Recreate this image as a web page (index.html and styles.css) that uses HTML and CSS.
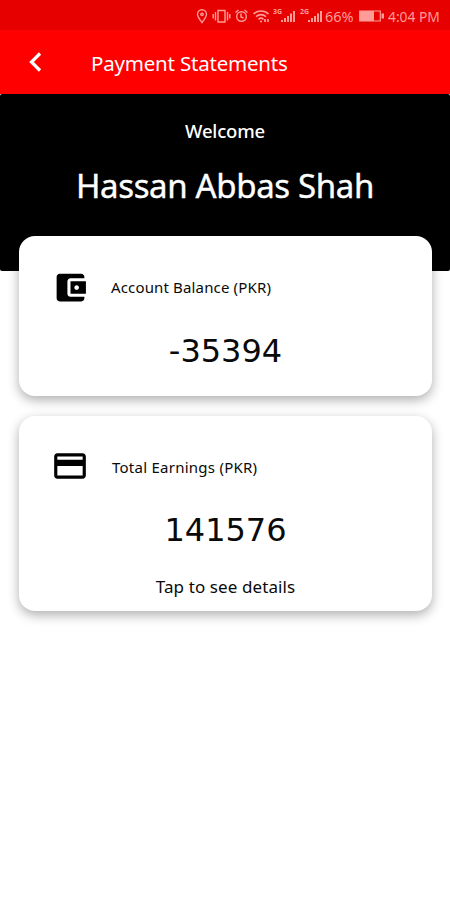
FILE: index.html
```html
<!DOCTYPE html>
<html lang="en">
<head>
<meta charset="utf-8">
<meta name="viewport" content="width=device-width, initial-scale=1">
<title>Payment Statements</title>
<link rel="stylesheet" href="styles.css">
</head>
<body>
<div class="status">
  <svg class="glyphs" width="132" height="20" viewBox="0 0 132 20" fill="none" stroke="currentColor" stroke-width="1.4">
    <path d="M7 16.5C4.500 13 2.500 11 2.500 8.300a4.500 4.500 0 0 1 9 0C11.500 11 9.500 13 7 16.500z"/><circle cx="7" cy="8.300" r="1.200"/>
    <path d="M23 4.500h7v11.500h-7zM20.500 6v8.500M32.500 6v8.500M18.200 8v4.500M34.800 8v4.500"/>
    <circle cx="46.500" cy="10.500" r="4.800"/><path d="M46 7.500v3.500l2.500 1M40.500 6.500l3-2.500M49.500 4l3 2.500"/>
    <path stroke-width="1.700" d="M58.500 8c4-4 11-4 15 0M61 10.700c3-2.500 7-2.500 10 0M63.500 13.300c1.500-1.300 3.500-1.300 5 0M65 15.500h2M70 13v3M73 13v3"/>
    <g stroke-width="2"><path d="M87 16v-2M90 16v-4M93 16V10M96 16V7.500M99 16V5"/><path d="M114 16v-2M117 16v-4M120 16V10M123 16V7.500M126 16V5"/></g>
    <g class="net"><text x="78" y="8">3G</text><text x="105" y="8">2G</text></g>
  </svg>
  <span class="percent">66%</span>
  <svg class="battery" width="26" height="12" viewBox="0 0 26 12"><path d="M.7 1h20.600v10H.7z" fill="none" stroke="currentColor" stroke-width="1.200"/><path d="M1 1h14v10H1zM22.500 3.500H25v5h-2.500z" fill="currentColor"/></svg>
  <span class="clock">4:04 PM</span>
</div>
<header class="bar">
  <svg class="back" width="14" height="22" viewBox="0 0 14 22"><path d="M12 2.500 3.500 11l8.500 8.500" fill="none" stroke="#fff" stroke-width="3.200"/></svg>
  <h1 class="title">Payment Statements</h1>
</header>
<section class="hero">
  <p class="welcome">Welcome</p>
  <p class="name">Hassan Abbas Shah</p>
</section>
<main class="cards">
  <article class="card balance">
    <div class="head">
      <svg class="icon" width="37" height="37" viewBox="0 0 24 24"><path d="M21 18v1c0 1.100-.9 2-2 2H5c-1.110 0-2-.9-2-2V5c0-1.100.89-2 2-2h14c1.100 0 2 .9 2 2v1h-9c-1.110 0-2 .9-2 2v8c0 1.100.89 2 2 2h9zm-9-2h10V8H12v8zm4-2.500c-.83 0-1.500-.67-1.500-1.500s.67-1.500 1.500-1.500 1.500.67 1.500 1.500-.67 1.500-1.500 1.500z"/></svg>
      <span class="label">Account Balance (PKR)</span>
    </div>
    <p class="amount">-35394</p>
  </article>
  <article class="card earnings">
    <div class="head">
      <svg class="icon" width="38" height="38" viewBox="0 0 24 24"><path d="M20 4H4c-1.110 0-1.990.89-1.990 2L2 18c0 1.110.89 2 2 2h16c1.110 0 2-.89 2-2V6c0-1.110-.89-2-2-2zm0 14H4v-6h16v6zm0-10H4V6h16v2z"/></svg>
      <span class="label">Total Earnings (PKR)</span>
    </div>
    <p class="amount">141576</p>
    <p class="hint">Tap to see details</p>
  </article>
</main>
</body>
</html>
```
FILE: styles.css
```css
* { box-sizing: border-box; }
body { margin: 0; min-height: 900px; background: #fff; color: #0a0a0a; font-family: "Noto Sans", sans-serif; }
h1, p { margin: 0; font-weight: 400; }
svg { display: block; flex: none; }
.status { height: 30px; background: #e60000; color: #ff9c98; display: flex; align-items: center; padding: 2px 0 0 195px; white-space: nowrap; }
.percent { width: 34px; margin-left: -2px; font-size: 14.5px; }
.clock { margin-left: 3px; font-size: 13.800px; }
.net { fill: currentColor; stroke: none; font-size: 7px; font-weight: 700; }
.bar { height: 64px; background: #fe0000; color: #fff; display: flex; align-items: center; padding: 0 0 0 28px; }
.title { margin-left: 49px; padding-top: 2px; font-size: 20.5px; letter-spacing: -.2px; line-height: 28px; white-space: nowrap; }
.hero { height: 177px; background: #000; color: #fff; text-align: center; padding-top: 23px; border-radius: 2px; }
.welcome { font-size: 18.500px; line-height: 28px; font-weight: 500; letter-spacing: -.2px; }
.name { font-size: 33px; line-height: 48px; margin-top: 17px; font-weight: 400; letter-spacing: -.35px; -webkit-text-stroke: .4px #fff; white-space: nowrap; }
.cards { margin: -35px 18px 0 19px; display: grid; gap: 20px; position: relative; }
.card { background: #fff; border-radius: 16px; box-shadow: 0 4px 12px rgba(0,0,0,.32); }
.balance { height: 160px; padding-top: 32px; }
.earnings { height: 195px; padding-top: 31px; }
.head { display: flex; align-items: center; height: 38px; padding-left: 33px; }
.label { font-size: 15px; letter-spacing: .15px; margin-left: 22px; white-space: nowrap; }
.earnings .head { padding-left: 32px; }
.earnings .label { margin-left: 23px; padding-top: 1px; letter-spacing: .25px; }
.amount { font-family: "DejaVu Sans", sans-serif; font-size: 32px; line-height: 44px; text-align: center; margin-top: 23px; }
.hint { font-size: 17px; letter-spacing: .1px; line-height: 24px; text-align: center; margin-top: 23px; }
```
